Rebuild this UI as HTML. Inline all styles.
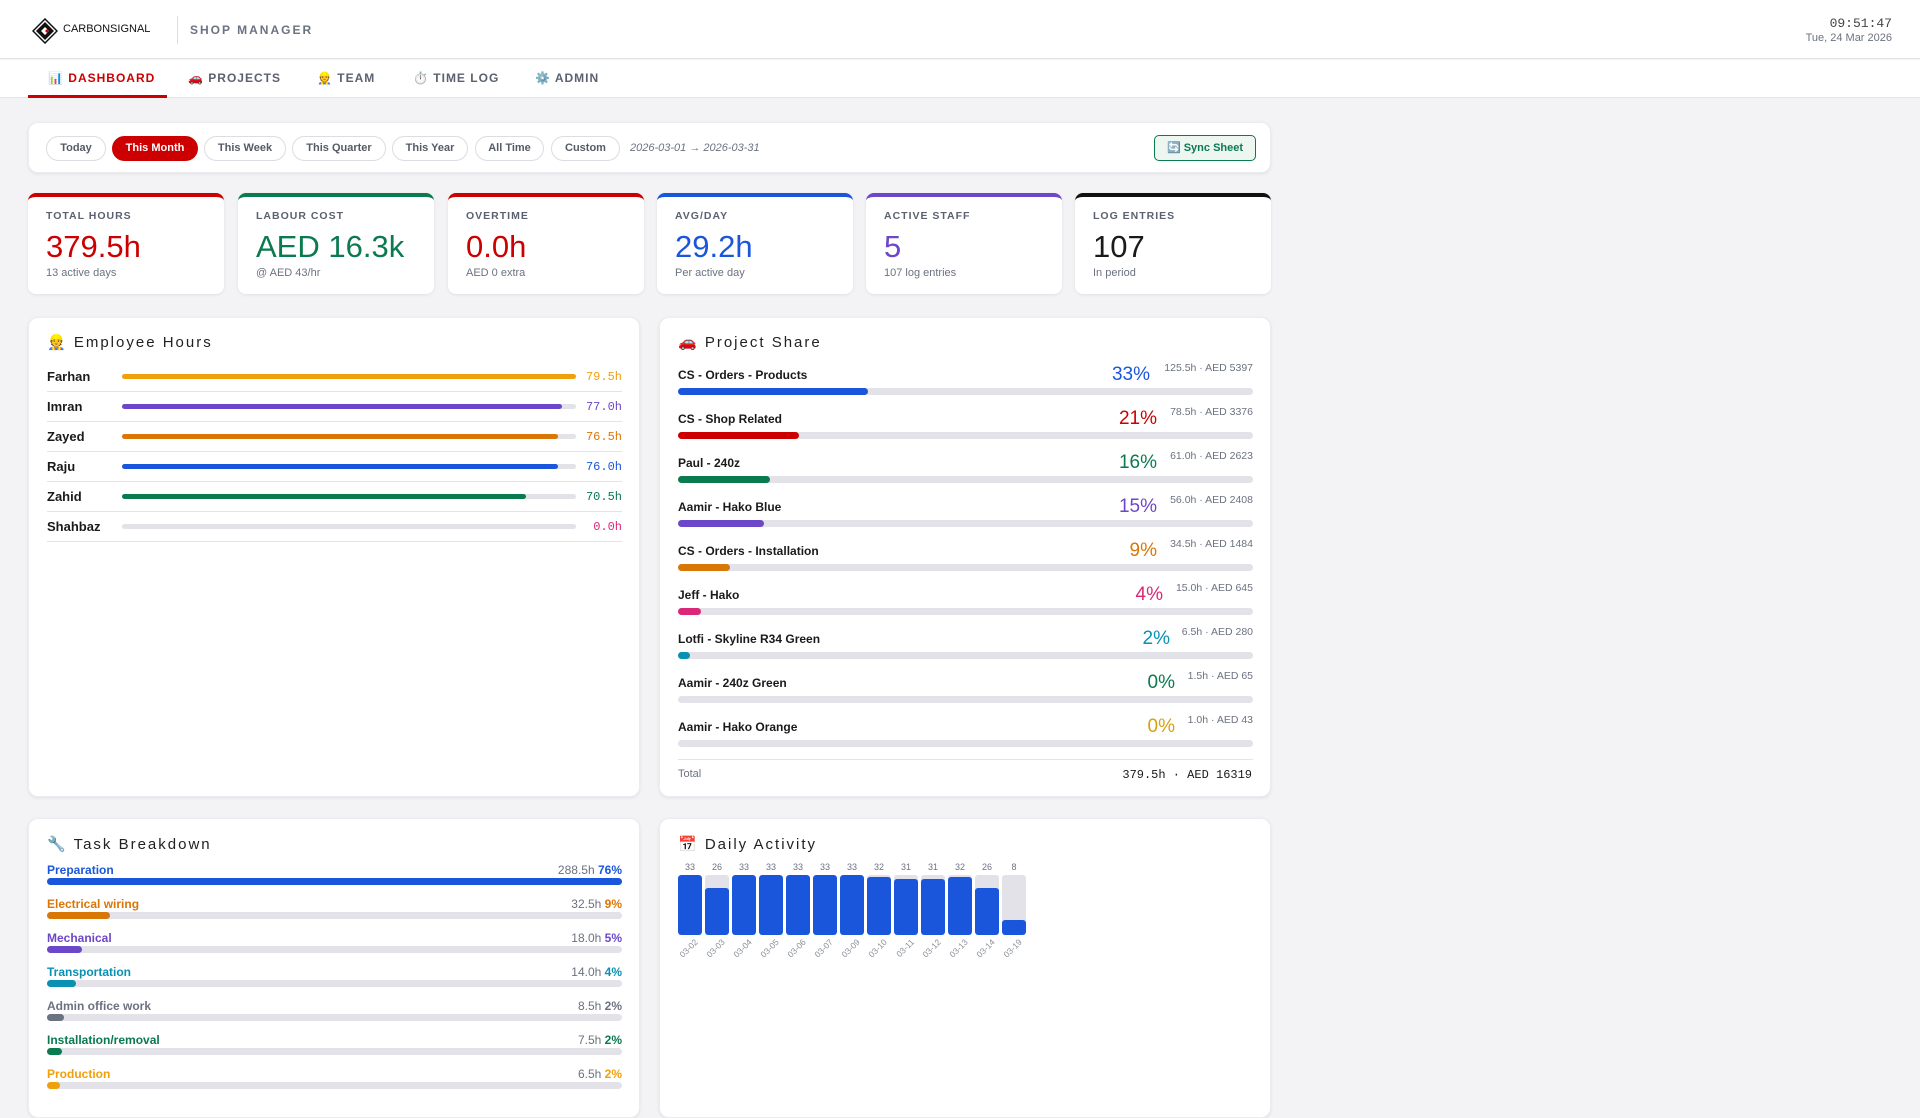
<!DOCTYPE html>
<html><head><meta charset="utf-8"><style>
*{box-sizing:border-box;margin:0;padding:0}
body{width:1920px;height:1080px;overflow:hidden;background:#f3f3f5;font-family:"Liberation Sans",sans-serif;color:#1a1a1a;position:relative}
.abs{position:absolute}
.hdr{left:0;top:0;width:1920px;height:59px;background:#fff;border-bottom:1px solid #e4e4e8}
.nav{left:0;top:60px;width:1920px;height:38px;background:#fff;border-bottom:1px solid #e4e4e8}
.tab{position:absolute;top:11px;font-size:12px;font-weight:bold;letter-spacing:1px;color:#5b6170}
.card{position:absolute;background:#fff;border-radius:10px;box-shadow:0 1px 3px rgba(0,0,0,.08);border:1px solid #ececf0}
.pill{position:absolute;top:13px;height:25px;border:1px solid #dcdce2;border-radius:13px;font-size:11px;font-weight:bold;color:#555b66;text-align:center;line-height:23px}
.stat{position:absolute;top:193px;width:196px;height:101px;background:#fff;border-radius:8px;box-shadow:0 1px 3px rgba(0,0,0,.08);border-top:4px solid}
.stat .l{position:absolute;left:18px;top:13px;font-size:10.5px;font-weight:bold;letter-spacing:1px;color:#5b6170}
.stat .n{position:absolute;left:18px;top:32px;font-size:31px}
.stat .s{position:absolute;left:18px;top:70px;font-size:11px;color:#6b7280}
.ttl{position:absolute;left:18px;top:15px;font-size:15px;letter-spacing:2px;color:#222}
.er{position:absolute;left:18px;width:575px;height:30px;border-bottom:1px solid #e4e4e8}
.er .nm{position:absolute;left:0;top:7px;font-size:13px;font-weight:bold}
.er .tr{position:absolute;left:75px;top:12px;width:454px;height:5px;background:#e2e2e8;border-radius:3px}
.er .fl{height:5px;border-radius:3px}
.er .v{position:absolute;right:0;top:8px;font-family:"Liberation Mono",monospace;font-size:12px}
.pr{position:absolute;left:18px;width:575px;height:44px}
.pr .nm{position:absolute;left:0;top:7px;font-size:12px;font-weight:bold}
.pr .pc{position:absolute;top:3px;font-size:19px}
.pr .mt{position:absolute;right:0;top:1px;font-size:10.5px;color:#6b7280}
.pr .tr{position:absolute;left:0;top:27px;width:575px;height:7px;background:#e2e2e8;border-radius:4px}
.pr .fl{height:7px;border-radius:4px}
.tk{position:absolute;left:18px;width:575px;height:34px}
.tk .nm{position:absolute;left:0;top:0;font-size:12px;font-weight:bold}
.tk .rt{position:absolute;right:0;top:0;font-size:12px;color:#6b7280}
.tk .tr{position:absolute;left:0;top:15px;width:575px;height:7px;background:#e2e2e8;border-radius:4px}
.tk .fl{height:7px;border-radius:4px}
.bar{position:absolute;top:56px;width:24px;height:60px;background:#e2e2e8;border-radius:3px;overflow:hidden}
.bar i{position:absolute;left:0;bottom:0;width:24px;background:#1a56db;border-radius:3px}
.bn{position:absolute;top:43px;width:24px;text-align:center;font-size:9px;color:#6b7280}
.bd{position:absolute;top:118px;font-size:8.5px;color:#8a8f99;transform:rotate(-45deg);transform-origin:right top;white-space:nowrap}
</style></head><body>
<div class="abs hdr">
 <svg class="abs" style="left:32px;top:18px" width="26" height="26" viewBox="0 0 26 26"><path d="M13 1 L25 13 L13 25 L1 13Z" fill="#fff" stroke="#111" stroke-width="1.5"/><path d="M13 4 L22 13 L13 22 L4 13Z" fill="#111"/><path d="M13 9 L17 13 L13 17 L9 13Z" fill="#fff"/><path d="M15 11 L17 13 L15 15 L13 13Z" fill="#d00"/></svg>
 <div class="abs" style="left:63px;top:23px;font-size:11px;letter-spacing:0px;color:#111">CARBONSIGNAL</div>
 <div class="abs" style="left:177px;top:16px;width:1px;height:28px;background:#ddd"></div>
 <div class="abs" style="left:190px;top:23px;font-size:12px;font-weight:bold;letter-spacing:2px;color:#6b7280">SHOP MANAGER</div>
 <div class="abs" style="right:28px;top:16px;font-family:'Liberation Mono',monospace;font-size:13px;color:#444">09:51:47</div>
 <div class="abs" style="right:28px;top:32px;font-size:11px;color:#6b7280">Tue, 24 Mar 2026</div>
</div>
<div class="abs nav">
 <div class="tab" style="left:48px;color:#cc0000">📊 DASHBOARD</div>
 <div class="abs" style="left:28px;top:35px;width:139px;height:3px;background:#cc0000"></div>
 <div class="tab" style="left:188px">🚗 PROJECTS</div>
 <div class="tab" style="left:317px">👷 TEAM</div>
 <div class="tab" style="left:413px">⏱️ TIME LOG</div>
 <div class="tab" style="left:535px">⚙️ ADMIN</div>
</div>
<div class="card" style="left:28px;top:122px;width:1243px;height:51px">
 <div class="pill" style="left:17px;width:60px">Today</div>
 <div class="pill" style="left:83px;width:86px;background:#cc0000;border-color:#cc0000;color:#fff">This Month</div>
 <div class="pill" style="left:175px;width:82px">This Week</div>
 <div class="pill" style="left:263px;width:94px">This Quarter</div>
 <div class="pill" style="left:363px;width:76px">This Year</div>
 <div class="pill" style="left:446px;width:69px">All Time</div>
 <div class="pill" style="left:522px;width:69px">Custom</div>
 <div class="abs" style="left:601px;top:19px;font-size:11px;font-style:italic;color:#6b7280">2026-03-01 → 2026-03-31</div>
 <div class="abs" style="left:1125px;top:12px;width:102px;height:26px;border:1px solid #0a7a4f;border-radius:5px;background:#eef6f1;color:#0a7a4f;font-size:11px;font-weight:bold;text-align:center;line-height:24px">🔄 Sync Sheet</div>
</div>
<div class="stat" style="left:28px;border-color:#cc0000"><div class="l">TOTAL HOURS</div><div class="n" style="color:#cc0000">379.5h</div><div class="s">13 active days</div></div>
<div class="stat" style="left:238px;border-color:#0a7a4f"><div class="l">LABOUR COST</div><div class="n" style="color:#0a7a4f">AED 16.3k</div><div class="s">@ AED 43/hr</div></div>
<div class="stat" style="left:448px;border-color:#cc0000"><div class="l">OVERTIME</div><div class="n" style="color:#cc0000">0.0h</div><div class="s">AED 0 extra</div></div>
<div class="stat" style="left:657px;border-color:#1a56db"><div class="l">AVG/DAY</div><div class="n" style="color:#1a56db">29.2h</div><div class="s">Per active day</div></div>
<div class="stat" style="left:866px;border-color:#6d47c9"><div class="l">ACTIVE STAFF</div><div class="n" style="color:#6d47c9">5</div><div class="s">107 log entries</div></div>
<div class="stat" style="left:1075px;border-color:#111"><div class="l">LOG ENTRIES</div><div class="n">107</div><div class="s">In period</div></div>

<div class="card" style="left:28px;top:317px;width:612px;height:480px">
 <div class="ttl">👷 Employee Hours</div>
 <div class="er" style="top:44px"><div class="nm">Farhan</div><div class="tr"><div class="fl" style="width:100%;background:#f0a00b"></div></div><div class="v" style="color:#f0a00b">79.5h</div></div>
 <div class="er" style="top:74px"><div class="nm">Imran</div><div class="tr"><div class="fl" style="width:97%;background:#6d47c9"></div></div><div class="v" style="color:#6d47c9">77.0h</div></div>
 <div class="er" style="top:104px"><div class="nm">Zayed</div><div class="tr"><div class="fl" style="width:96%;background:#d97706"></div></div><div class="v" style="color:#d97706">76.5h</div></div>
 <div class="er" style="top:134px"><div class="nm">Raju</div><div class="tr"><div class="fl" style="width:96%;background:#1a56db"></div></div><div class="v" style="color:#1a56db">76.0h</div></div>
 <div class="er" style="top:164px"><div class="nm">Zahid</div><div class="tr"><div class="fl" style="width:89%;background:#0a7a4f"></div></div><div class="v" style="color:#0a7a4f">70.5h</div></div>
 <div class="er" style="top:194px"><div class="nm">Shahbaz</div><div class="tr"></div><div class="v" style="color:#db2777">0.0h</div></div>
</div>

<div class="card" style="left:659px;top:317px;width:612px;height:480px">
 <div class="ttl">🚗 Project Share</div>
 <div class="pr" style="top:43px"><div class="nm">CS - Orders - Products</div><div class="pc" style="right:103px;color:#1a56db">33%</div><div class="mt">125.5h · AED 5397</div><div class="tr"><div class="fl" style="width:33%;background:#1a56db"></div></div></div>
 <div class="pr" style="top:87px"><div class="nm">CS - Shop Related</div><div class="pc" style="right:96px;color:#cc0000">21%</div><div class="mt">78.5h · AED 3376</div><div class="tr"><div class="fl" style="width:21%;background:#cc0000"></div></div></div>
 <div class="pr" style="top:131px"><div class="nm">Paul - 240z</div><div class="pc" style="right:96px;color:#0a7a4f">16%</div><div class="mt">61.0h · AED 2623</div><div class="tr"><div class="fl" style="width:16%;background:#0a7a4f"></div></div></div>
 <div class="pr" style="top:175px"><div class="nm">Aamir - Hako Blue</div><div class="pc" style="right:96px;color:#6d47c9">15%</div><div class="mt">56.0h · AED 2408</div><div class="tr"><div class="fl" style="width:15%;background:#6d47c9"></div></div></div>
 <div class="pr" style="top:219px"><div class="nm">CS - Orders - Installation</div><div class="pc" style="right:96px;color:#d97706">9%</div><div class="mt">34.5h · AED 1484</div><div class="tr"><div class="fl" style="width:9%;background:#d97706"></div></div></div>
 <div class="pr" style="top:263px"><div class="nm">Jeff - Hako</div><div class="pc" style="right:90px;color:#db2777">4%</div><div class="mt">15.0h · AED 645</div><div class="tr"><div class="fl" style="width:4%;background:#db2777"></div></div></div>
 <div class="pr" style="top:307px"><div class="nm">Lotfi - Skyline R34 Green</div><div class="pc" style="right:83px;color:#0891b2">2%</div><div class="mt">6.5h · AED 280</div><div class="tr"><div class="fl" style="width:2%;background:#0891b2"></div></div></div>
 <div class="pr" style="top:351px"><div class="nm">Aamir - 240z Green</div><div class="pc" style="right:78px;color:#0a7a4f">0%</div><div class="mt">1.5h · AED 65</div><div class="tr"></div></div>
 <div class="pr" style="top:395px"><div class="nm">Aamir - Hako Orange</div><div class="pc" style="right:78px;color:#d9a00b">0%</div><div class="mt">1.0h · AED 43</div><div class="tr"></div></div>
 <div class="abs" style="left:18px;top:441px;width:575px;height:1px;background:#e4e4e8"></div>
 <div class="abs" style="left:18px;top:450px;font-size:11px;color:#6b7280">Total</div>
 <div class="abs" style="right:18px;top:450px;font-family:'Liberation Mono',monospace;font-size:12px">379.5h · AED 16319</div>
</div>

<div class="card" style="left:28px;top:818px;width:612px;height:300px">
 <div class="ttl" style="top:16px">🔧 Task Breakdown</div>
 <div class="tk" style="top:44px"><div class="nm" style="color:#1a56db">Preparation</div><div class="rt">288.5h <b style="color:#1a56db">76%</b></div><div class="tr"><div class="fl" style="width:100%;background:#1a56db"></div></div></div>
 <div class="tk" style="top:78px"><div class="nm" style="color:#d97706">Electrical wiring</div><div class="rt">32.5h <b style="color:#d97706">9%</b></div><div class="tr"><div class="fl" style="width:11%;background:#d97706"></div></div></div>
 <div class="tk" style="top:112px"><div class="nm" style="color:#6d47c9">Mechanical</div><div class="rt">18.0h <b style="color:#6d47c9">5%</b></div><div class="tr"><div class="fl" style="width:6%;background:#6d47c9"></div></div></div>
 <div class="tk" style="top:146px"><div class="nm" style="color:#0891b2">Transportation</div><div class="rt">14.0h <b style="color:#0891b2">4%</b></div><div class="tr"><div class="fl" style="width:5%;background:#0891b2"></div></div></div>
 <div class="tk" style="top:180px"><div class="nm" style="color:#6b7280">Admin office work</div><div class="rt">8.5h <b style="color:#6b7280">2%</b></div><div class="tr"><div class="fl" style="width:3%;background:#6b7280"></div></div></div>
 <div class="tk" style="top:214px"><div class="nm" style="color:#0a7a4f">Installation/removal</div><div class="rt">7.5h <b style="color:#0a7a4f">2%</b></div><div class="tr"><div class="fl" style="width:2.6%;background:#0a7a4f"></div></div></div>
 <div class="tk" style="top:248px"><div class="nm" style="color:#f0a00b">Production</div><div class="rt">6.5h <b style="color:#f0a00b">2%</b></div><div class="tr"><div class="fl" style="width:2.3%;background:#f0a00b"></div></div></div>
</div>

<div class="card" style="left:659px;top:818px;width:612px;height:300px">
 <div class="ttl" style="top:16px">📅 Daily Activity</div>
 <div id="da"></div>
</div>
<script>
var v=[33,26,33,33,33,33,33,32,31,31,32,26,8],d=["03-02","03-03","03-04","03-05","03-06","03-07","03-09","03-10","03-11","03-12","03-13","03-14","03-19"],h="";
for(var i=0;i<13;i++){var x=18+i*27;h+='<div class="bn" style="left:'+x+'px">'+v[i]+'</div><div class="bar" style="left:'+x+'px"><i style="height:'+Math.round(v[i]/33*60)+'px"></i></div><div class="bd" style="right:'+(612-x-17)+'px">'+d[i]+'</div>';}
document.getElementById('da').outerHTML=h;
</script>
</body></html>
